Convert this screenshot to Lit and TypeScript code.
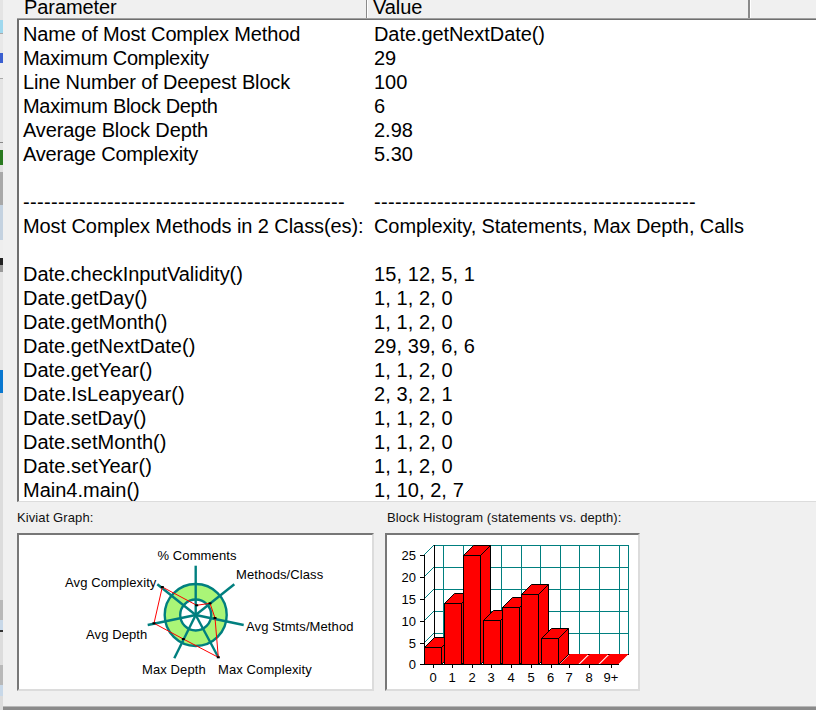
import { LitElement, html, css, svg } from "lit";
import { customElement } from "lit/decorators.js";

const DASH = "----------------------------------------------";
// [parameter, value, parameter tracking, value tracking]
const ROWS: [string, string, number, number][] = [
  ["Name of Most Complex Method", "Date.getNextDate()", -0.15, -0.08],
  ["Maximum Complexity", "29", -0.3, 0],
  ["Line Number of Deepest Block", "100", -0.15, 0],
  ["Maximum Block Depth", "6", -0.29, 0],
  ["Average Block Depth", "2.98", -0.13, 0],
  ["Average Complexity", "5.30", -0.19, 0],
  ["", "", 0, 0],
  [DASH, DASH, 0.34, 0.34],
  ["Most Complex Methods in 2 Class(es):", "Complexity, Statements, Max Depth, Calls", -0.08, -0.08],
  ["", "", 0, 0],
  ["Date.checkInputValidity()", "15, 12, 5, 1", -0.04, 0.08],
  ["Date.getDay()", "1, 1, 2, 0", 0, 0.08],
  ["Date.getMonth()", "1, 1, 2, 0", 0, 0.08],
  ["Date.getNextDate()", "29, 39, 6, 6", 0, 0.08],
  ["Date.getYear()", "1, 1, 2, 0", 0, 0.08],
  ["Date.IsLeapyear()", "2, 3, 2, 1", 0.1, 0.08],
  ["Date.setDay()", "1, 1, 2, 0", 0, 0.08],
  ["Date.setMonth()", "1, 1, 2, 0", 0, 0.08],
  ["Date.setYear()", "1, 1, 2, 0", 0.05, 0.08],
  ["Main4.main()", "1, 10, 2, 7", 0, 0.08],
];

// What shows of the windows behind, along the left edge: [height, colour]
const STRIP: [number, string][] = [
  [20, "#e4e4e4"], [13, "#9fd8ee"], [1, "#aaaaaa"], [19, "#e8e8e8"], [10, "#3a5fd0"],
  [15, "#eeeeee"], [1, "#aaaaaa"], [63, "#e4e4e4"], [1, "#888888"], [7, "#e4e4e4"],
  [15, "#2a7a20"], [7, "#e0e0e0"], [33, "#a8a8a8"], [35, "#c4d2e0"], [18, "#eeeeee"],
  [7, "#222222"], [7, "#999999"], [98, "#e4e4e4"], [23, "#0a78d0"], [207, "#dcdcdc"],
  [20, "#b8b8b8"], [10, "#c8d8e8"], [2, "#333333"], [33, "#dcdcdc"], [20, "#b8b8b8"],
  [11, "#c8d8e8"], [14, "#dcdcdc"],
];

// Kiviat geometry, in page coordinates; canvas origin = page 19,535
const OX = 19, OY = 535;
const C: [number, number] = [195.7 - OX, 615 - OY];
const SPOKES: [number, number][] = [
  [195.7, 565.7], [234.3, 584.3], [243.7, 625], [218.3, 657.3],
  [174.3, 658.3], [147.7, 625], [157.3, 584.3],
];
const POLY: [number, number][] = [
  [196.7, 605.3], [210, 603.3], [215, 618], [218.3, 657.3],
  [183.3, 639], [154, 623.3], [162.3, 587],
];
const KLABELS: [string, number, number][] = [
  ["% Comments", 157.5, 560],
  ["Methods/Class", 236, 579],
  ["Avg Stmts/Method", 246, 631],
  ["Max Complexity", 218, 674],
  ["Max Depth", 142, 674],
  ["Avg Depth", 86, 639],
  ["Avg Complexity", 65, 587],
];

// Histogram geometry, in page coordinates; canvas origin = page 387,535
const HX = 387, HY = 535;
const BARS: [number, number][] = [
  [424, 647], [444, 603], [463, 555], [483, 620], [502, 607], [521, 594], [541, 638],
];
const FLAT = [560, 580, 600];
const WALLX = [443, 463, 482, 501, 521, 540, 560, 579, 599, 619];
const WALLY = [567, 589, 611, 633];
const TICKS: [string, number][] = [
  ["25", 560], ["20", 582], ["15", 604], ["10", 626], ["5", 648], ["0", 669],
];
const XL: [string, number][] = [
  ["0", 433], ["1", 452], ["2", 472], ["3", 491], ["4", 511], ["5", 531],
  ["6", 550.5], ["7", 569], ["8", 589], ["9+", 611],
];

@customElement("app-root")
export class AppRoot extends LitElement {
  static styles = css`
    :host {
      display: block;
      width: 816px;
      height: 710px;
      overflow: hidden;
      font-family: "Liberation Sans", Arial, sans-serif;
      color: #000;
    }
    .screen { display: flex; width: 816px; height: 710px; }
    .strip { width: 3px; flex: none; display: flex; flex-direction: column; }
    .window {
      flex: 1; min-width: 0; display: flex; flex-direction: column;
      background: #f0f0f0; padding-left: 14px;
    }
    .head {
      height: 18px; flex: none; display: flex; overflow: hidden;
      border-bottom: 1px solid #a0a0a0;
    }
    .hc {
      flex: none; box-sizing: border-box;
      font-size: 20px; line-height: 14px; letter-spacing: -0.08px;
    }
    .hc.p { width: 350px; padding-left: 7px; border-right: 1px solid #8a8a8a; }
    .hc.v { width: 383px; padding-left: 5px; border-left: 1px solid #fff; border-right: 2px solid #8a8a8a; }
    .hc.r { flex: 1; border-left: 1px solid #fff; }
    .list {
      height: 483px; flex: none; box-sizing: border-box; background: #fff;
      border-top: 1px solid #6f6f6f; border-left: 2px solid #6f6f6f; border-bottom: 1px solid #dcdcdc;
      padding: 2px 0 0 4px; overflow: hidden;
    }
    .row { display: flex; height: 24px; font-size: 20px; line-height: 24px; white-space: pre; }
    .a { width: 351px; flex: none; }
    .lower { flex: 1; display: flex; gap: 11px; padding-top: 8px; }
    .group { display: flex; flex-direction: column; }
    .cap { height: 23px; font-size: 13px; line-height: 16px; letter-spacing: 0.1px; color: #111; }
    .cap.h2 { padding-left: 2px; }
    .box {
      box-sizing: border-box; background: #fff;
      border: 2px solid #dcdcdc; border-top-color: #777; border-left-color: #777;
      height: 158px;
    }
    .box svg { display: block; }
    .k { width: 357px; }
    .h { width: 255px; }
    text { font-family: "Liberation Sans", Arial, sans-serif; font-size: 13px; fill: #000; }
    text.kl { letter-spacing: 0.1px; }
    .foot { height: 4px; flex: none; box-sizing: border-box; background: #8a8a8a; border-top: 1px solid #b8b8b8; margin-left: -14px; }
  `;

  private kiviat() {
    const [cx, cy] = C;
    const pts = POLY.map(([x, y]) => `${x - OX},${y - OY}`).join(" ");
    return svg`
      <circle cx=${cx} cy=${cy} r="31" fill="#aaf577" stroke="#007f7f" stroke-width="2.4"/>
      <circle cx=${cx} cy=${cy} r="15.5" fill="#fff" stroke="#007f7f" stroke-width="2.4"/>
      ${SPOKES.map(([x, y]) => svg`<line x1=${cx} y1=${cy} x2=${x - OX} y2=${y - OY} stroke="#007f7f" stroke-width="2.4"/>`)}
      <polygon points=${pts} fill="none" stroke="#f00" stroke-width="1"/>
      ${POLY.map(([x, y]) => svg`<rect x=${x - OX - 1.5} y=${y - OY - 1} width="3" height="2" fill="#000"/>`)}
      ${KLABELS.map(([t, x, y]) => svg`<text class="kl" x=${x - OX} y=${y - OY}>${t}</text>`)}
    `;
  }

  private histogram() {
    const X = (v: number) => v - HX;
    const Y = (v: number) => v - HY;
    const floor = Y(664), D = 10, W = 17;
    return svg`
      <g shape-rendering="crispEdges" stroke="#007f7f" stroke-width="1">
        ${WALLX.map((x) => svg`<line x1=${X(x) + 0.5} y1=${Y(545)} x2=${X(x) + 0.5} y2=${Y(654)}/>`)}
        ${WALLY.map((y) => svg`<line x1=${X(434)} y1=${Y(y) + 0.5} x2=${X(628)} y2=${Y(y) + 0.5}/>`)}
        <line x1=${X(434)} y1=${Y(545) + 0.5} x2=${X(628)} y2=${Y(545) + 0.5}/>
        <line x1=${X(628) + 0.5} y1=${Y(545)} x2=${X(628) + 0.5} y2=${Y(654)}/>
      </g>
      ${[555, 577, 599, 621, 643].map((y) => svg`<line x1=${X(424)} y1=${Y(y)} x2=${X(434)} y2=${Y(y) - 10} stroke="#007f7f"/>`)}
      <g shape-rendering="crispEdges" stroke="#000" stroke-width="1">
        <line x1=${X(434) + 0.5} y1=${Y(545)} x2=${X(434) + 0.5} y2=${Y(654)}/>
        <line x1=${X(434)} y1=${Y(654) + 0.5} x2=${X(629)} y2=${Y(654) + 0.5}/>
        <line x1=${X(424) + 0.5} y1=${Y(555)} x2=${X(424) + 0.5} y2=${Y(665)}/>
        ${[555, 577, 599, 621, 643].map((y) => svg`<line x1=${X(420)} y1=${Y(y) + 0.5} x2=${X(424)} y2=${Y(y) + 0.5}/>`)}
      </g>
      <line x1=${X(628)} y1=${Y(654)} x2=${X(618)} y2=${Y(664)} stroke="#000" stroke-dasharray="1 1"/>
      ${FLAT.map((x) => svg`
        <polygon points="${X(x)},${floor} ${X(x) + 18.5},${floor} ${X(x) + 28.5},${floor - 10} ${X(x) + 10},${floor - 10}" fill="#f00"/>
      `)}
      ${BARS.map(([x, top]) => {
        const l = X(x) + 0.5, t = Y(top) + 0.5, r = l + W, b = floor + 0.5;
        return svg`
          <g stroke="#000" stroke-width="1" stroke-linejoin="miter">
            <polygon points="${r},${t} ${r + D},${t - D} ${r + D},${b - D} ${r},${b}" fill="#f00"/>
            <polygon points="${l},${t} ${l + D},${t - D} ${r + D},${t - D} ${r},${t}" fill="#f00"/>
            <rect x=${l} y=${t} width=${W} height=${b - t} fill="#f00"/>
          </g>
        `;
      })}
      <g shape-rendering="crispEdges" stroke="#000">
        <line x1=${X(420)} y1=${floor + 0.5} x2=${X(619)} y2=${floor + 0.5}/>
        ${XL.map(([, x]) => svg`<line x1=${X(Math.round(x)) + 0.5} y1=${floor} x2=${X(Math.round(x)) + 0.5} y2=${floor + 4}/>`)}
      </g>
      ${TICKS.map(([t, y]) => svg`<text x=${X(416)} y=${Y(y)} text-anchor="end">${t}</text>`)}
      ${XL.map(([t, x]) => svg`<text x=${X(x)} y=${Y(682)} text-anchor="middle">${t}</text>`)}
    `;
  }

  render() {
    return html`
      <div class="screen">
        <div class="strip">
          ${STRIP.map(([h, c]) => html`<div style="height:${h}px;background:${c}"></div>`)}
        </div>
        <div class="window">
          <div class="head">
            <div class="hc p">Parameter</div>
            <div class="hc v">Value</div>
            <div class="hc r"></div>
          </div>
          <div class="list">
            ${ROWS.map(([a, b, sa, sb]) => html`<div class="row"><div class="a" style="letter-spacing:${sa}px">${a}</div><div style="letter-spacing:${sb}px">${b}</div></div>`)}
          </div>
          <div class="lower">
            <div class="group">
              <div class="cap">Kiviat Graph:</div>
              <div class="box k"><svg width="353" height="154">${this.kiviat()}</svg></div>
            </div>
            <div class="group">
              <div class="cap h2">Block Histogram (statements vs. depth):</div>
              <div class="box h"><svg width="251" height="154">${this.histogram()}</svg></div>
            </div>
          </div>
          <div class="foot"></div>
        </div>
      </div>
    `;
  }
}
